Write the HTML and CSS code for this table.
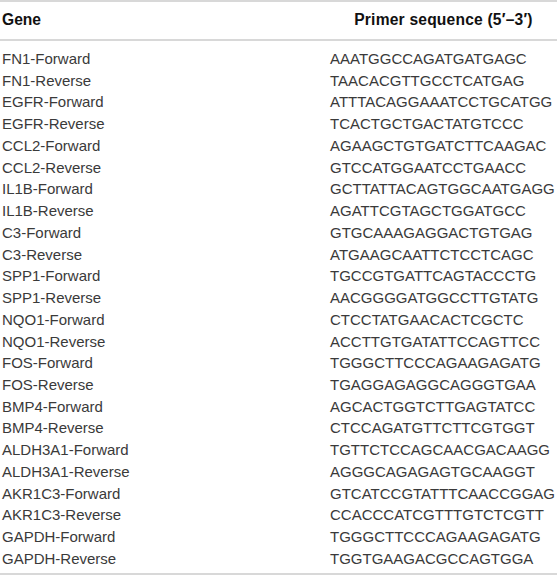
FILE: index.html
```html
<!DOCTYPE html>
<html>
<head>
<meta charset="utf-8">
<link rel="stylesheet" href="styles.css">
</head>
<body>
<div class="tbl">
  <div class="head">
    <div class="c1">Gene</div>
    <div class="c2">Primer sequence (5′–3′)</div>
  </div>
  <div class="body">
    <div class="row"><div class="c1">FN1-Forward</div><div class="c2">AAATGGCCAGATGATGAGC</div></div>
    <div class="row"><div class="c1">FN1-Reverse</div><div class="c2">TAACACGTTGCCTCATGAG</div></div>
    <div class="row"><div class="c1">EGFR-Forward</div><div class="c2">ATTTACAGGAAATCCTGCATGG</div></div>
    <div class="row"><div class="c1">EGFR-Reverse</div><div class="c2">TCACTGCTGACTATGTCCC</div></div>
    <div class="row"><div class="c1">CCL2-Forward</div><div class="c2">AGAAGCTGTGATCTTCAAGAC</div></div>
    <div class="row"><div class="c1">CCL2-Reverse</div><div class="c2">GTCCATGGAATCCTGAACC</div></div>
    <div class="row"><div class="c1">IL1B-Forward</div><div class="c2">GCTTATTACAGTGGCAATGAGG</div></div>
    <div class="row"><div class="c1">IL1B-Reverse</div><div class="c2">AGATTCGTAGCTGGATGCC</div></div>
    <div class="row"><div class="c1">C3-Forward</div><div class="c2">GTGCAAAGAGGACTGTGAG</div></div>
    <div class="row"><div class="c1">C3-Reverse</div><div class="c2">ATGAAGCAATTCTCCTCAGC</div></div>
    <div class="row"><div class="c1">SPP1-Forward</div><div class="c2">TGCCGTGATTCAGTACCCTG</div></div>
    <div class="row"><div class="c1">SPP1-Reverse</div><div class="c2">AACGGGGATGGCCTTGTATG</div></div>
    <div class="row"><div class="c1">NQO1-Forward</div><div class="c2">CTCCTATGAACACTCGCTC</div></div>
    <div class="row"><div class="c1">NQO1-Reverse</div><div class="c2">ACCTTGTGATATTCCAGTTCC</div></div>
    <div class="row"><div class="c1">FOS-Forward</div><div class="c2">TGGGCTTCCCAGAAGAGATG</div></div>
    <div class="row"><div class="c1">FOS-Reverse</div><div class="c2">TGAGGAGAGGCAGGGTGAA</div></div>
    <div class="row"><div class="c1">BMP4-Forward</div><div class="c2">AGCACTGGTCTTGAGTATCC</div></div>
    <div class="row"><div class="c1">BMP4-Reverse</div><div class="c2">CTCCAGATGTTCTTCGTGGT</div></div>
    <div class="row"><div class="c1">ALDH3A1-Forward</div><div class="c2">TGTTCTCCAGCAACGACAAGG</div></div>
    <div class="row"><div class="c1">ALDH3A1-Reverse</div><div class="c2">AGGGCAGAGAGTGCAAGGT</div></div>
    <div class="row"><div class="c1">AKR1C3-Forward</div><div class="c2">GTCATCCGTATTTCAACCGGAG</div></div>
    <div class="row"><div class="c1">AKR1C3-Reverse</div><div class="c2">CCACCCATCGTTTGTCTCGTT</div></div>
    <div class="row"><div class="c1">GAPDH-Forward</div><div class="c2">TGGGCTTCCCAGAAGAGATG</div></div>
    <div class="row"><div class="c1">GAPDH-Reverse</div><div class="c2">TGGTGAAGACGCCAGTGGA</div></div>
  </div>
</div>
</body>
</html>
```
FILE: styles.css
```css
html, body {
  margin: 0;
  padding: 0;
  background: #ffffff;
}
body {
  font-family: "Liberation Sans", Arial, sans-serif;
  color: #3a3a3a;
}
.tbl {
  width: 557px;
  border-top: 2px solid #d8d8d8;
  border-bottom: 2px solid #d8d8d8;
}
.head {
  display: grid;
  grid-template-columns: 330px 1fr;
  border-bottom: 2px solid #d8d8d8;
  font-weight: bold;
  color: #111;
  font-size: 15.6px;
  line-height: 21px;
  padding-top: 7px;
  box-sizing: border-box;
  height: 39px;
}
.head .c1 { padding-left: 2px; }
.head .c2 { text-align: center; letter-spacing: 0.2px; }
.body {
  padding: 7px 0 3px;
}
.row {
  display: grid;
  grid-template-columns: 330px 1fr;
  font-size: 15px;
  line-height: 21.74px;
  height: 21.74px;
}
.row .c1 { padding-left: 2px; }
```
